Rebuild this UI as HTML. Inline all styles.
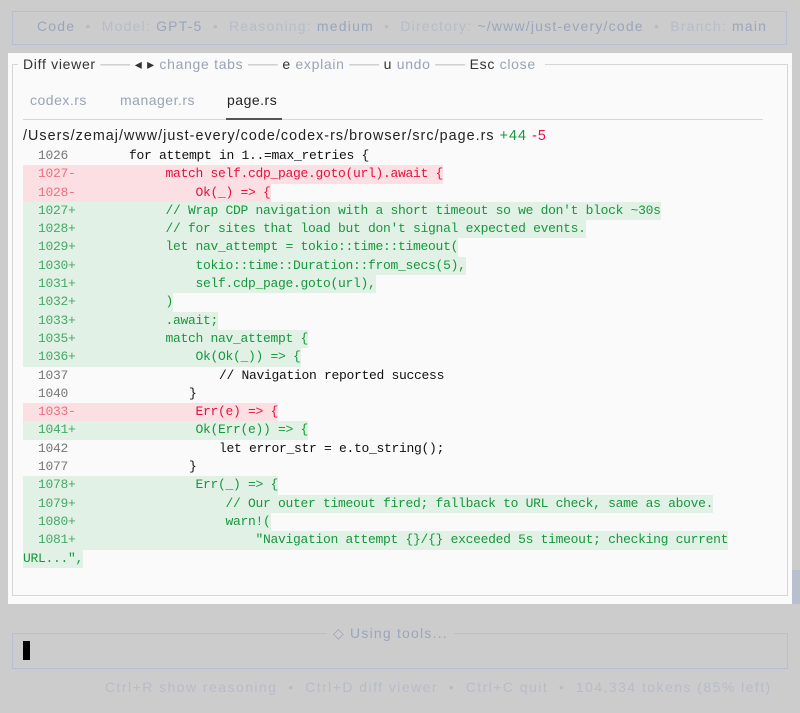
<!DOCTYPE html>
<html><head><meta charset="utf-8">
<style>
html,body{margin:0;padding:0;}
body{width:800px;height:713px;background:#cccccc;position:relative;overflow:hidden;font-family:"Liberation Mono",monospace;}
.abs{position:absolute;white-space:pre;}
.top{left:12px;top:11px;width:775px;height:34px;border:1px solid #b9bfd0;box-sizing:border-box;}
.toptxt{left:37px;top:18px;font-family:"Liberation Sans",sans-serif;font-size:14px;letter-spacing:1.2px;color:#b7bcc8;}
.toptxt b{font-weight:normal;color:#9ba5bb;}
.panel{left:8px;top:53px;width:784px;height:551px;background:#fafafa;}
.inner{left:12px;top:64px;width:776px;height:532px;border:1px solid #d6d6d6;box-sizing:border-box;}
.hint{left:18px;top:56px;font-family:"Liberation Sans",sans-serif;font-size:14px;color:#333;background:#fafafa;padding:0 5px;letter-spacing:0.7px;}
.hint i{font-style:normal;color:#9aa3b5;}
.hint s{text-decoration:none;color:#bbb;letter-spacing:0;}
.tab{top:92px;font-family:"Liberation Sans",sans-serif;font-size:14px;letter-spacing:0.5px;color:#9aa3b5;}
.tabline{left:23px;top:119px;width:740px;height:1px;background:#d8d8d8;}
.tabul{left:226px;top:118px;width:56px;height:2px;background:#555;}
.path{left:23px;top:128px;font-family:"Liberation Sans",sans-serif;font-size:14.3px;color:#222;letter-spacing:1.05px;}
.rows{position:absolute;left:23px;top:147px;font-size:13px;letter-spacing:-0.3px;line-height:18.3px;}
.r{height:18.3px;white-space:pre;}
.r>span{display:inline-block;}
.n{display:inline-block;box-sizing:border-box;padding-left:15px;color:#777;}
.ctx .n{width:46px;}
.del .n,.add .n{width:52.5px;}
.del>span{background:#fbdfe2;}
.add>span{background:#e2f1e5;}
.del .n{color:#ec6f84;}
.del .c{color:#e3123f;}
.add .n{color:#45a868;}
.add .c{color:#17973e;}
.ctx .c{color:#111;}
.sb{left:792px;top:570px;width:8px;height:34px;background:#b8bfcf;}
.ibox{left:12px;top:633px;width:776px;height:36px;border:1px solid #b9bfd0;box-sizing:border-box;}
.using{left:327px;top:625px;background:#cccccc;padding:0 6px;font-family:"Liberation Sans",sans-serif;font-size:14px;color:#9ba5bb;letter-spacing:1.2px;}
.cur{left:23px;top:641px;width:7px;height:19px;background:#000;}
.foot{left:105px;top:679px;font-family:"Liberation Sans",sans-serif;font-size:14px;color:#b7bcc8;letter-spacing:1.45px;}
</style></head><body>
<div class="abs top"></div>
<div class="abs toptxt"><b>Code</b>  •  Model: <b>GPT-5</b>  •  Reasoning: <b>medium</b>  •  Directory: <b>~/www/just-every/code</b>  •  Branch: <b>main</b></div>
<div class="abs panel"></div>
<div class="abs inner"></div>
<div class="abs sb"></div>
<div class="abs hint">Diff viewer <s>───</s> ◂ ▸ <i>change tabs</i> <s>───</s> e <i>explain</i> <s>───</s> u <i>undo</i> <s>───</s> Esc <i>close</i> </div>
<div class="abs tab" style="left:30px">codex.rs</div>
<div class="abs tab" style="left:120px">manager.rs</div>
<div class="abs tab" style="left:227px;color:#222">page.rs</div>
<div class="abs tabline"></div>
<div class="abs tabul"></div>
<div class="abs path">/Users/zemaj/www/just-every/code/codex-rs/browser/src/page.rs <span style="color:#17973e">+44</span> <span style="color:#e3123f">-5</span></div>
<div class="rows"><div class="r ctx"><span><span class="n">1026</span><span class="c">        for attempt in 1..=max_retries {</span></span></div><div class="r del"><span><span class="n">1027-</span><span class="c">            match self.cdp_page.goto(url).await {</span></span></div><div class="r del"><span><span class="n">1028-</span><span class="c">                Ok(_) => {</span></span></div><div class="r add"><span><span class="n">1027+</span><span class="c">            // Wrap CDP navigation with a short timeout so we don't block ~30s</span></span></div><div class="r add"><span><span class="n">1028+</span><span class="c">            // for sites that load but don't signal expected events.</span></span></div><div class="r add"><span><span class="n">1029+</span><span class="c">            let nav_attempt = tokio::time::timeout(</span></span></div><div class="r add"><span><span class="n">1030+</span><span class="c">                tokio::time::Duration::from_secs(5),</span></span></div><div class="r add"><span><span class="n">1031+</span><span class="c">                self.cdp_page.goto(url),</span></span></div><div class="r add"><span><span class="n">1032+</span><span class="c">            )</span></span></div><div class="r add"><span><span class="n">1033+</span><span class="c">            .await;</span></span></div><div class="r add"><span><span class="n">1035+</span><span class="c">            match nav_attempt {</span></span></div><div class="r add"><span><span class="n">1036+</span><span class="c">                Ok(Ok(_)) => {</span></span></div><div class="r ctx"><span><span class="n">1037</span><span class="c">                    // Navigation reported success</span></span></div><div class="r ctx"><span><span class="n">1040</span><span class="c">                }</span></span></div><div class="r del"><span><span class="n">1033-</span><span class="c">                Err(e) => {</span></span></div><div class="r add"><span><span class="n">1041+</span><span class="c">                Ok(Err(e)) => {</span></span></div><div class="r ctx"><span><span class="n">1042</span><span class="c">                    let error_str = e.to_string();</span></span></div><div class="r ctx"><span><span class="n">1077</span><span class="c">                }</span></span></div><div class="r add"><span><span class="n">1078+</span><span class="c">                Err(_) => {</span></span></div><div class="r add"><span><span class="n">1079+</span><span class="c">                    // Our outer timeout fired; fallback to URL check, same as above.</span></span></div><div class="r add"><span><span class="n">1080+</span><span class="c">                    warn!(</span></span></div><div class="r add"><span><span class="n">1081+</span><span class="c">                        "Navigation attempt {}/{} exceeded 5s timeout; checking current</span></span></div><div class="r add"><span><span class="c">URL...",</span></span></div></div>
<div class="abs ibox"></div>
<div class="abs using">◇ Using tools...</div>
<div class="abs cur"></div>
<div class="abs foot">Ctrl+R show reasoning  •  Ctrl+D diff viewer  •  Ctrl+C quit  •  104,334 tokens (85% left)</div>
</body></html>
